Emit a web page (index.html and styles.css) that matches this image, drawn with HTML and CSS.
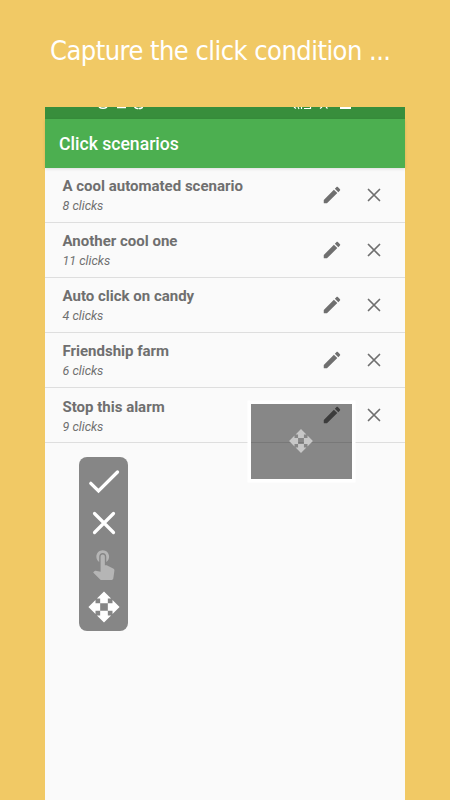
FILE: index.html
```html
<!DOCTYPE html>
<html lang="en">
<head>
<meta charset="utf-8">
<title>Click scenarios</title>
<link rel="stylesheet" href="styles.css">
</head>
<body>
<svg class="defs" aria-hidden="true">
  <symbol id="edit" viewBox="0 0 24 24"><path d="M3.3 17.2 14.06 6.19l3.75 3.75L6.8 20.8q-.2.2-.5.2H3.6q-.6 0-.6-.6v-2.5q0-.4.3-.7zM20.71 7.04c.39-.39.39-1.02 0-1.41l-2.34-2.34c-.39-.39-1.02-.39-1.41 0l-1.83 1.83 3.75 3.75 1.83-1.83z"/></symbol>
  <symbol id="close" viewBox="0 0 24 24"><path d="M6 6l12 12M18 6l-12 12" fill="none" stroke="currentColor" stroke-width="1.900" stroke-linecap="round"/></symbol>
  <symbol id="move" viewBox="0 0 24 24"><path d="M9.300 9.300h5.400V6H17l-5-5-5 5h2.300zM9.300 9.300H6V7l-5 5 5 5v-2.300h3.300zM23 12l-5-5v2.300h-3.300v5.400H18V17zM14.700 14.700H9.300V18H7l5 5 5-5h-2.300z"/></symbol>
</svg>
<h1 class="caption">Capture the click condition ...</h1>
<main class="phone">
  <div class="status">
    <svg width="360" height="12" viewBox="0 0 360 12" fill="none" stroke="#fff">
      <path d="M54 0q4 2.6 8 0M72 .5h9M89.500 0q2 2 4 1.200M94 1.500q3 0 3.500-1.500" stroke-width="1.500"/>
      <path d="M249 0l2 1.500M253 0l1 2M256.500 0v2M259 1.500h6.500V0M275 1.500l2-1.500M281 0l1.500 1.500" stroke-width="1.200"/>
      <path d="M295 1h11" stroke-width="2"/>
    </svg>
  </div>
  <header class="bar">Click scenarios</header>
  <ul class="list">
    <li class="row"><div class="text"><b>A cool automated scenario</b><i>8 clicks</i></div><svg class="edit"><use href="#edit"/></svg><svg class="close"><use href="#close"/></svg></li>
    <li class="row"><div class="text"><b>Another cool one</b><i>11 clicks</i></div><svg class="edit"><use href="#edit"/></svg><svg class="close"><use href="#close"/></svg></li>
    <li class="row"><div class="text"><b>Auto click on candy</b><i>4 clicks</i></div><svg class="edit"><use href="#edit"/></svg><svg class="close"><use href="#close"/></svg></li>
    <li class="row"><div class="text"><b>Friendship farm</b><i>6 clicks</i></div><svg class="edit"><use href="#edit"/></svg><svg class="close"><use href="#close"/></svg></li>
    <li class="row"><div class="text"><b>Stop this alarm</b><i>9 clicks</i></div><svg class="edit"><use href="#edit"/></svg><svg class="close"><use href="#close"/></svg></li>
  </ul>
  <div class="target"><svg class="target-icon"><use href="#move"/></svg></div>
  <div class="tools">
    <svg viewBox="0 0 34 34"><path d="M3.800 18.300l7.700 7.700L30.500 7" fill="none" stroke="#fff" stroke-width="3.300" stroke-linecap="round"/></svg>
    <svg viewBox="0 0 34 34"><path d="M7.500 7.500l19 19M26.500 7.500l-19 19" fill="none" stroke="#fff" stroke-width="3.200" stroke-linecap="round"/></svg>
    <svg class="dim" viewBox="0.400 1.400 24 24"><path d="M9 11.240V7.500C9 6.120 10.120 5 11.500 5S14 6.120 14 7.500v3.740c1.210-.81 2-2.180 2-3.740C16 5.010 13.990 3 11.500 3S7 5.010 7 7.500c0 1.560.79 2.930 2 3.740zm9.840 4.630l-4.540-2.260c-.17-.07-.35-.11-.54-.11H13v-6c0-.83-.67-1.500-1.500-1.500S10 6.670 10 7.500v10.740l-3.430-.72c-.08-.01-.15-.03-.24-.03-.31 0-.59.13-.79.33l-.79.8 4.940 4.940c.27.27.65.44 1.060.44h6.790c.75 0 1.330-.55 1.440-1.280l.75-5.270c.01-.07.02-.14.02-.2 0-.62-.38-1.160-.91-1.380z"/></svg>
    <svg><use href="#move"/></svg>
  </div>
</main>
</body>
</html>
```
FILE: styles.css
```css
* { box-sizing: border-box; }
body {
  margin: 0;
  height: 800px;
  display: flex;
  flex-direction: column;
  align-items: center;
  overflow: hidden;
  background: #f1c965;
  font-family: Roboto, "Liberation Sans", sans-serif;
}
svg { display: block; flex: none; fill: currentColor; }
.defs { position: absolute; width: 0; height: 0; }
.caption {
  margin: 0;
  width: 100%;
  height: 107px;
  padding: 34px 0 0 50px;
  color: #fff;
  font: 400 27px/34px "DejaVu Sans Condensed", "DejaVu Sans", sans-serif;
  font-stretch: condensed;
  letter-spacing: -0.530px;
  white-space: nowrap;
}
.phone {
  position: relative;
  width: 360px;
  height: 693px;
  background: #fafafa;
}
.status { height: 12px; background: #388e3c; }
.status svg { fill: none; }
.bar {
  height: 48.5px;
  padding-left: 14px;
  background: #4caf50;
  box-shadow: 0 1px 3px rgba(0, 0, 0, .12);
  color: #fff;
  font-size: 17.600px;
  font-weight: 500;
  line-height: 50px;
}
.list { margin: 0; padding: 0; list-style: none; }
.row {
  display: flex;
  align-items: center;
  height: 55.150px;
  padding: 0 20.500px 0 17.500px;
  border-bottom: 1px solid #dedede;
  color: #6f6f6f;
}
.text { flex: 1; display: flex; flex-direction: column; padding-top: 2px; }
.text b { font-size: 15px; line-height: 20px; font-weight: 700; }
.text i { font-size: 12.500px; line-height: 19px; }
.edit { width: 22px; height: 22px; margin-right: 20px; }
.close { width: 22px; height: 22px; }
.target {
  position: absolute;
  left: 206px;
  top: 296.500px;
  width: 101px;
  height: 75.500px;
  display: grid;
  place-items: center;
  box-shadow: 0 0 0 3.500px #fff;
  background: rgba(0, 0, 0, .46);
}
.target-icon { width: 26px; height: 26px; margin-right: 1px; color: #c7c7c7; }
.tools {
  position: absolute;
  left: 34px;
  top: 349.500px;
  width: 49px;
  height: 174.500px;
  padding: 8px 0;
  display: flex;
  flex-direction: column;
  align-items: center;
  gap: 7.700px;
  border-radius: 8px;
  background: #868686;
  color: #fff;
}
.tools svg { width: 34px; height: 34px; overflow: visible; }
.dim { color: #b5b5b5; }
```
